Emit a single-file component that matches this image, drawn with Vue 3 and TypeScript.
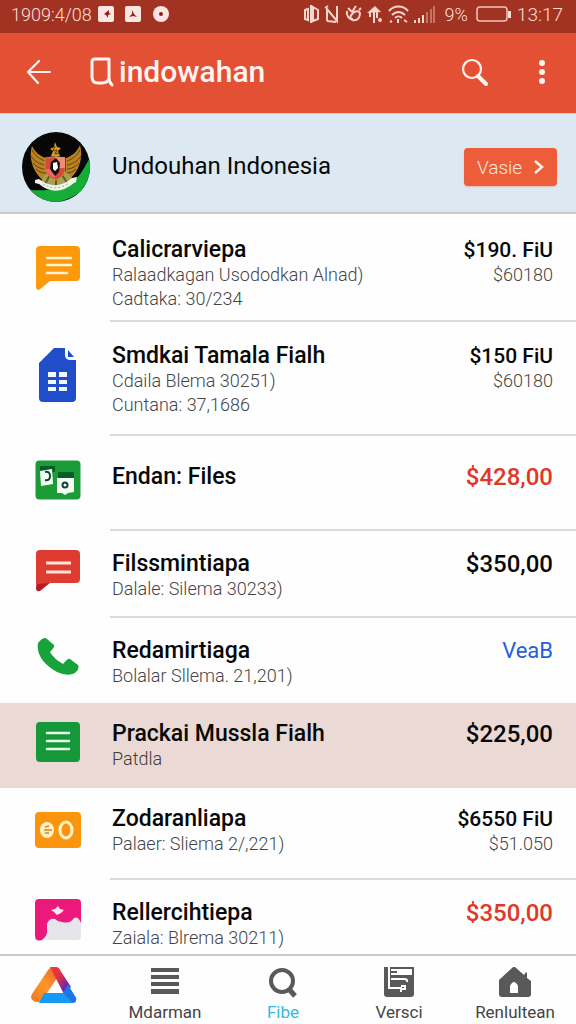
<script setup lang="ts">
import { ref } from 'vue'

type IconName = 'chat' | 'sheet' | 'cards' | 'message' | 'phone' | 'list' | 'coins' | 'photo'
type Tone = 'dark' | 'red' | 'link'

interface Entry {
  icon: IconName
  title: string
  lines: string[]
  amount: string
  tone: Tone
  detail?: string
  spacing: string
}

const entries: Entry[] = [
  { icon: 'chat', title: 'Calicrarviepa', lines: ['Ralaadkagan Usododkan Alnad)', 'Cadtaka: 30/234'], amount: '$190. FiU', tone: 'dark', detail: '$60180', spacing: 'first' },
  { icon: 'sheet', title: 'Smdkai Tamala Fialh', lines: ['Cdaila Blema 30251)', 'Cuntana: 37,1686'], amount: '$150 FiU', tone: 'dark', detail: '$60180', spacing: 'tall' },
  { icon: 'cards', title: 'Endan: Files', lines: [], amount: '$428,00', tone: 'red', spacing: 'single' },
  { icon: 'message', title: 'Filssmintiapa', lines: ['Dalale: Silema 30233)'], amount: '$350,00', tone: 'dark', spacing: 'compact' },
  { icon: 'phone', title: 'Redamirtiaga', lines: ['Bolalar Sllema. 21,201)'], amount: 'VeaB', tone: 'link', spacing: 'plain' },
  { icon: 'list', title: 'Prackai Mussla Fialh', lines: ['Patdla'], amount: '$225,00', tone: 'dark', spacing: 'selected' },
  { icon: 'coins', title: 'Zodaranliapa', lines: ['Palaer: Sliema 2/,221)'], amount: '$6550 FiU', tone: 'dark', detail: '$51.050', spacing: 'medium' },
  { icon: 'photo', title: 'Rellercihtiepa', lines: ['Zaiala: Blrema 30211)'], amount: '$350,00', tone: 'red', spacing: 'last' },
]

const tabs = ['', 'Mdarman', 'Fibe', 'Versci', 'Renlultean']
const active = ref(2)
</script>

<template>
  <div class="page">
    <div class="status">
      <span>1909:4/08</span>
      <svg class="status-left" width="72" height="18" viewBox="0 0 72 18">
        <rect x="0" y="1" width="16" height="16" rx="2" fill="#fbe6e2" />
        <path d="M6 9l5-4v3l2 1-3 1v3l-2-3z" fill="#8c2118" />
        <rect x="27" y="1" width="16" height="16" rx="2" fill="#fbe6e2" />
        <path d="M34 5l2 4 3 3-4-1-4 1 3-3z" fill="#8c2118" />
        <circle cx="63" cy="9" r="8" fill="#fbe6e2" />
        <circle cx="63" cy="9" r="2" fill="#8c2118" />
      </svg>
      <span class="spacer"></span>
      <svg width="132" height="20" viewBox="0 0 132 20" fill="none" stroke="#f6d5cf" stroke-width="2">
        <path d="M8 1v18M2 6v9l3 1V5zM10 3l5 3v9l-5 2z" />
        <path d="M24 17V5l10 12V2M22 4l3-2M24 17l9 1" />
        <path d="M45 4l4 4m4-6-4 6m-5-1c-2 9 12 14 13 3 0-3-4-4-7-1s-4 6 0 6m6-9 2-2" />
        <path d="M64 9l8-7 6 6z" fill="#f6d5cf" stroke="none" />
        <path d="M67 8v5m4-9v15m3-13v8" />
        <circle cx="77" cy="16" r="1" />
        <path d="M86 7c5-6 14-6 19 0M89 11c4-4 9-4 13 0M92 14c2-2 5-2 7 0" />
        <path d="M95 15v4M89 17l-2 1M101 16l3 2" />
        <path d="M112 16v3M116 14v5M120 11v8" />
        <path d="M124 8v11M128 5v14M131 2v17" opacity=".4" />
      </svg>
      <span class="battery-text">9%</span>
      <svg width="36" height="18" viewBox="0 0 36 18">
        <rect x="1" y="2" width="30" height="14" rx="3" fill="none" stroke="#f2c4bb" stroke-width="1.5" />
        <path d="M32 6h3v7h-3z" fill="#f9e0db" />
      </svg>
      <span class="clock">13:17</span>
    </div>

    <header class="appbar">
      <button class="icon-button" type="button" aria-label="Back">
        <svg width="26" height="26" viewBox="0 0 26 26" fill="none" stroke="#fff4f0" stroke-width="2.2" stroke-linecap="round" stroke-linejoin="round">
          <path d="M13 2L2 13l10 11M2 13h22" />
        </svg>
      </button>
      <h1>
        <svg width="24" height="30" viewBox="0 0 24 30" fill="none" stroke="#fff4f0" stroke-width="3" stroke-linecap="round" stroke-linejoin="round">
          <path d="M2 5Q2 2 5 2H19V21q0 4 3 7M2 5V20q0 6 6 6h4q6 0 7-5" />
        </svg>
        <span>indowahan</span>
      </h1>
      <button class="icon-button search" type="button" aria-label="Search">
        <svg width="28" height="30" viewBox="0 0 28 30" fill="none" stroke="#fff4f0">
          <circle cx="11" cy="12" r="9" stroke-width="2.2" />
          <path d="M17 19l8 8" stroke-width="4" stroke-linecap="round" />
        </svg>
      </button>
      <button class="icon-button" type="button" aria-label="More">
        <svg width="8" height="26" viewBox="0 0 8 26" fill="#fff4f0">
          <circle cx="4" cy="4" r="3" /><circle cx="4" cy="13" r="3" /><circle cx="4" cy="22" r="3" />
        </svg>
      </button>
    </header>

    <section class="profile">
      <svg width="68" height="70" viewBox="0 0 68 70">
        <defs><clipPath id="disc"><ellipse cx="34" cy="35" rx="34" ry="35" /></clipPath></defs>
        <g clip-path="url(#disc)">
          <rect width="68" height="70" fill="#060706" />
          <path d="M8 58c20 1 32-1 42-8S62 35 68 26v20C63 60 51 66 34 71H16z" fill="#15ad38" />
        </g>
        <path d="M23 50C12 42 6 27 10 14c3 6 9 11 14 12zM44 50c12-8 18-23 14-37-3 7-8 11-14 13z" fill="#b98320" />
        <g fill="none" stroke="#5f4211" stroke-width="1">
          <path d="M10 18c3 6 8 9 13 11M9 24c4 6 9 8 14 9M11 31c4 4 8 6 12 6M14 37c3 3 6 4 9 4" />
          <path d="M58 18c-3 6-8 9-13 11M59 24c-4 6-9 8-14 9M57 31c-4 4-8 6-12 6M54 37c-3 3-6 4-9 4" />
        </g>
        <path d="M29 24l2-5-3-2 4-2 1-5 2 5 4 1-3 3 2 5z" fill="#cf9d28" />
        <path d="M33 14l-2 5 4-1-2 4 4-1" fill="none" stroke="#5a3a0c" />
        <path d="M19 50l6-11h18l10 10-8 5H24z" fill="#a8a154" />
        <path d="M28 43l-5 9M34 44v10M40 43l6 9" stroke="#5f5d21" stroke-width="2" />
        <path d="M23 26q11-3 20 0v13q-2 6-9 9-8-3-11-9z" fill="#d8473b" stroke="#c09035" />
        <path d="M33 25h10v11H33z" fill="#ef8b78" />
        <path d="M24 37h9v9q-6-2-9-7z" fill="#ea6d60" />
        <path d="M29 30l5-4 4 5-1 9-4 4-5-7z" fill="#15110f" />
        <path d="M31 31l4-1 1 6-3 3-2-2z" fill="#fff" />
        <path d="M13 48l4-1q17 13 33-1l5-1-1 5-2 1q-18 15-35 1l-4-1z" fill="#f2f3ed" />
        <path d="M21 52q13 8 26-1" fill="none" stroke="#98a39a" stroke-dasharray="2 2" />
      </svg>
      <h2>Undouhan Indonesia</h2>
      <button class="action" type="button">
        <span>Vasie</span>
        <svg width="10" height="16" viewBox="0 0 10 16" fill="none" stroke="#fff5ee" stroke-width="2.5"><path d="M1 2l7 6-7 6" /></svg>
      </button>
    </section>

    <ul class="entries">
      <li v-for="entry in entries" :key="entry.title" class="entry" :class="entry.spacing">
        <div class="picture">
          <svg v-if="entry.icon === 'chat'" width="44" height="44" viewBox="0 0 44 44">
            <path d="M4 0h36q4 0 4 4v27q0 4-4 4H14L3 44q-3 0-3-3V4q0-4 4-4z" fill="#fd990c" />
            <path d="M11 12h24M11 19h24M11 27h20" stroke="#fff3d6" stroke-width="2.5" stroke-linecap="round" />
          </svg>
          <svg v-else-if="entry.icon === 'sheet'" width="38" height="54" viewBox="0 0 38 54">
            <path d="M15 0h11v7q0 4 4 5h7v38q0 4-4 4H4q-4 0-4-4V15z" fill="#204ecb" />
            <path d="M29 2l6 7h-6z" fill="#204ecb" />
            <path d="M9 24h8v5H9zM20 24h8v5h-8zM9 32h8v4H9zM20 32h8v4h-8zM9 39h8v4H9zM20 39h8v4h-8z" fill="#f3f8ff" />
          </svg>
          <svg v-else-if="entry.icon === 'cards'" width="46" height="40" viewBox="0 0 46 40">
            <rect x="0.5" y="0.5" width="45" height="39" rx="4" fill="#1b9c36" />
            <path d="M5 6h15v6H5zM23 12h16v7H23z" fill="#075d2a" />
            <path d="M5 11l12-2 1 15-12 2z" fill="#f3fff4" />
            <path d="M10 12q5-1 5 4t-5 4" fill="none" stroke="#15432c" stroke-width="2" />
            <path d="M22 18h17v14l-6 1-3 2-3-2h-5z" fill="#f3fff4" />
            <circle cx="30" cy="25" r="2.5" fill="none" stroke="#15432c" stroke-width="2" />
          </svg>
          <svg v-else-if="entry.icon === 'message'" width="44" height="42" viewBox="0 0 44 42">
            <path d="M1 28h19L4 41q-4 1-4-3z" fill="#b9191f" />
            <path d="M4 0h36q4 0 4 4v25q0 4-4 4H16L0 34V4q0-4 4-4z" fill="#df3c31" />
            <path d="M10 13h25M10 22h25" stroke="#ffe2da" stroke-width="3" />
          </svg>
          <svg v-else-if="entry.icon === 'phone'" width="42" height="38" viewBox="0 0 42 38">
            <path d="M1 5Q7-2 10 1l7 6q1 2-4 7 4 7 13 12 5-6 7-5l8 6q2 4-3 8-7 4-18-1C7 27-1 16 1 5z" fill="#17a23b" />
          </svg>
          <svg v-else-if="entry.icon === 'list'" width="44" height="40" viewBox="0 0 44 40">
            <rect width="44" height="40" rx="4" fill="#16973a" />
            <path d="M11 11h22M11 19h22M11 27h22" stroke="#e5ffe9" stroke-width="2.5" stroke-linecap="round" />
          </svg>
          <svg v-else-if="entry.icon === 'coins'" width="46" height="36" viewBox="0 0 46 36">
            <rect width="46" height="36" rx="4" fill="#fb950d" />
            <ellipse cx="12" cy="18" rx="7" ry="8" fill="#fff2c9" />
            <path d="M9 18h8M10 15l4-1M10 21h4" stroke="#df820e" stroke-width="1.5" />
            <ellipse cx="31" cy="18" rx="6" ry="8" fill="none" stroke="#fff2c9" stroke-width="3" />
          </svg>
          <svg v-else width="46" height="42" viewBox="0 0 46 42">
            <rect x="8" y="8" width="38" height="33" rx="4" fill="#e6e5ec" />
            <path d="M4 0h38q4 0 4 4v20q-3-7-7-5-4 6-12 4-4 0-7-3-6-1-8 5v8q0 4-5 8-3 1-5 0-2-1-2-4V4q0-4 4-4z" fill="#ec197d" />
            <path d="M16 11l4-1 3-3 2 3 4 1-3 3-4 2-3-3z" fill="#ffe7f2" />
          </svg>
        </div>
        <div class="body">
          <div class="copy">
            <h3>{{ entry.title }}</h3>
            <p v-for="line in entry.lines" :key="line">{{ line }}</p>
          </div>
          <div class="values">
            <a v-if="entry.tone === 'link'" href="#" class="amount link">{{ entry.amount }}</a>
            <strong v-else class="amount" :class="[entry.tone, { paired: entry.detail }]">{{ entry.amount }}</strong>
            <p v-if="entry.detail">{{ entry.detail }}</p>
          </div>
        </div>
      </li>
    </ul>

    <nav class="tabs">
      <button v-for="(tab, index) in tabs" :key="index" type="button" :class="{ active: active === index }" :aria-label="tab || 'Home'" @click="active = index">
        <svg v-if="index === 0" width="46" height="36" viewBox="0 0 46 36">
          <defs>
            <linearGradient id="warm" x1="1" y1="0" x2="0" y2="1"><stop stop-color="#ed5d29" /><stop offset=".5" stop-color="#fb962b" /><stop offset="1" stop-color="#ef7b20" /></linearGradient>
            <linearGradient id="cool" x1="0" y1="0" x2="1" y2="1"><stop stop-color="#f53c31" /><stop offset=".45" stop-color="#d62e4f" /><stop offset=".75" stop-color="#6727b4" /><stop offset="1" stop-color="#1d69e5" /></linearGradient>
          </defs>
          <path d="M17 3q3-4 8-3l3 8L10 35H5q-7-2-4-8z" fill="url(#warm)" />
          <path d="M19 0h6q3 0 4 3l11 17-7 7z" fill="url(#cool)" />
          <path d="M13 26h19l5-8 8 13q1 5-4 5H8z" fill="#149af3" />
          <path d="M37 18l8 13q1 4-3 5L32 26z" fill="#1d75e8" />
        </svg>
        <svg v-else-if="index === 1" width="28" height="28" viewBox="0 0 28 28"><path d="M0 1h28v4H0zM0 8h28v4H0zM0 15h28v4H0zM0 22h28v5H0z" fill="#58595b" /></svg>
        <svg v-else-if="index === 2" width="30" height="32" viewBox="0 0 30 32" fill="none" stroke="#58595b">
          <circle cx="14" cy="14" r="11" stroke-width="4" /><path d="M21 22l6 7" stroke-width="5" />
        </svg>
        <svg v-else-if="index === 3" width="30" height="30" viewBox="0 0 30 30">
          <path d="M0 0h30v27q0 3-3 3H3q-3 0-3-3z" fill="#58595b" />
          <path d="M5 0v21h13M7 12h13q4 0 3 3M17 19h4v3h-4v3" fill="none" stroke="#fff" stroke-width="2" />
          <path d="M7 2h21v6H7z" fill="#fff" />
          <path d="M7 5h6" stroke="#58595b" stroke-width="2" />
        </svg>
        <svg v-else width="32" height="30" viewBox="0 0 32 30">
          <path d="M16 0l9 8 2-3 1 1v5l4 3v13q0 3-3 3H3q-3 0-3-3V13L13 1q2-2 3-1z" fill="#58595b" />
          <path d="M11 26v-7q4-8 8 0v7z" fill="#fff" />
        </svg>
        <span v-if="tab">{{ tab }}</span>
      </button>
    </nav>
  </div>
</template>

<style>
body {
  margin: 0;
}
</style>

<style scoped>
.page {
  display: flex;
  flex-direction: column;
  min-height: 100vh;
  background: #fefefe;
  font-family: Roboto, "Liberation Sans", sans-serif;
  color: #080808;
}
h1, h2, h3, p, ul {
  margin: 0;
  padding: 0;
}
button {
  border: 0;
  margin: 0;
  padding: 0;
  background: none;
  font: inherit;
  color: inherit;
  cursor: pointer;
}
svg {
  display: block;
  flex: none;
}
.status {
  display: flex;
  align-items: center;
  height: 28px;
  padding: 0 13px 5px 11px;
  background: #a23322;
  color: #f9ded8;
  font-size: 18px;
  font-weight: 300;
}
.status-left {
  margin-left: 6px;
}
.spacer {
  flex: 1;
}
.battery-text {
  margin: 0 8px 0 10px;
}
.clock {
  margin-left: 5px;
  font-size: 19px;
}
.appbar {
  display: flex;
  align-items: center;
  box-sizing: border-box;
  height: 80px;
  padding: 0 30px 2px 26px;
  background: #e45034;
  color: #fff4f0;
}
.status,
.appbar {
  flex: none;
}
.appbar h1 {
  display: flex;
  align-items: center;
  gap: 5px;
  flex: 1;
  margin-left: 38px;
  font-size: 30px;
  font-weight: 500;
  line-height: 36px;
}
.search {
  margin-right: 49px;
}
.profile {
  display: flex;
  align-items: center;
  box-sizing: border-box;
  height: 101px;
  padding: 8px 19px 0 22px;
  background: #dde9f2;
  border-top: 1px solid #dcc5c9;
  border-bottom: 2px solid #c7cacf;
}
.profile h2 {
  flex: 1;
  margin-left: 22px;
  padding-bottom: 2px;
  font-size: 24px;
  font-weight: 400;
  line-height: 28px;
}
.action {
  display: flex;
  align-items: center;
  justify-content: center;
  gap: 12px;
  width: 93px;
  height: 38px;
  border-radius: 4px;
  background: #ed5d3a;
  color: #ffe6d8;
  font-size: 19px;
  font-weight: 300;
  box-shadow: 0 1px 2px #e8b6ab;
}
.entries {
  flex: 1;
  list-style: none;
}
.entry {
  display: flex;
  box-sizing: border-box;
}
.picture {
  display: flex;
  align-items: center;
  justify-content: center;
  flex: none;
  box-sizing: border-box;
  width: 110px;
  padding: 0 0 8px 5px;
}
.picture svg {
  margin-right: 0;
}
.body {
  display: flex;
  justify-content: space-between;
  flex: 1;
  box-sizing: border-box;
  padding: 20px 23px 0 2px;
  border-bottom: 2px solid #d9dadd;
}
.body h3 {
  font-size: 23px;
  font-weight: 500;
  line-height: 26px;
}
.amount {
  display: block;
  font-size: 24px;
  font-weight: 500;
  line-height: 26px;
}
.amount.paired {
  font-size: 21px;
}
.body p {
  color: #454547;
  font-size: 18px;
  font-weight: 300;
  line-height: 24px;
}
.values {
  text-align: right;
}
.red {
  color: #df3829;
}
.amount.link {
  color: #2460dc;
  font-size: 22px;
  font-weight: 400;
  text-decoration: none;
}
.picture {
  padding-right: 0;
}
.first { height: 108px; }
.first .body { padding-top: 23px; }
.first .picture { padding-bottom: 0; }
.tall { height: 114px; }
.tall .body { padding-top: 21px; }
.single { height: 95px; }
.single .body { padding-top: 28px; }
.compact { height: 87px; }
.plain { height: 85px; }
.selected { height: 85px; background: #ead9d4; }
.medium { height: 92px; }
.selected .body,
.medium .body { padding-top: 18px; }
.last { height: 74px; }
.last .picture { padding: 6px 0 0 5px; }
.plain .body,
.selected .body,
.last .body { border-bottom-color: transparent; }
.selected p { color: #443a38; }
.tabs {
  display: grid;
  grid-template-columns: 108fr 114fr 122fr 110fr 122fr;
  flex: none;
  height: 69px;
  border-top: 2px solid #c9cacd;
  color: #444547;
}
.tabs button {
  display: flex;
  flex-direction: column;
  align-items: center;
  justify-content: space-between;
  padding: 11px 0 3px;
  font-size: 17px;
  line-height: 20px;
}
.tabs .active {
  color: #36b9df;
}
</style>
